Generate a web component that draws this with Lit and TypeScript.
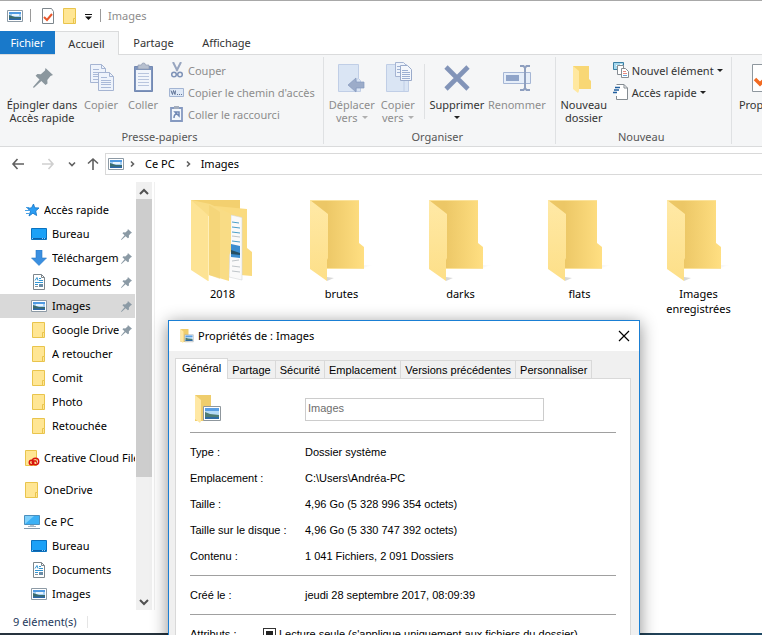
import { LitElement, html, svg, css, nothing } from "lit";
import { customElement, property, state } from "lit/decorators.js";
import { classMap } from "lit/directives/class-map.js";

const picture = (w = 16, h = 16) => html`<svg width=${w} height=${h} viewBox="0 0 16 16" aria-hidden="true">
  <path d="M.5 2.500h15v11H.5z" fill="#fff" stroke="#8d9aa5" />
  <path d="M2 4h12v8H2z" fill="#a5cff5" />
  <path d="M2 4h12v2H2z" fill="#4f9ae2" />
  <path d="M5 6h7v2H5z" fill="#e8f4fd" />
  <path d="M2 7l3 1 3 1h6v3H2z" fill="#3c6c6c" />
  <path d="M2 10.500h12V12H2z" fill="#2a66a8" />
</svg>`;

const folder = html`<svg width="16" height="16" viewBox="0 0 16 16" aria-hidden="true">
  <path d="M1.500.5h12v10l-1 5h-11z" fill="#ffe694" stroke="#e9c44c" />
  <path d="M11.500 15.500v-5h2v5z" fill="#ffe694" stroke="#e9c44c" />
</svg>`;

const desktop = html`<svg width="16" height="16" viewBox="0 0 16 16" aria-hidden="true">
  <path d="M.5 2.500h15v11H.5z" fill="#1ba1f7" stroke="#0a72bf" />
  <path d="M1 12h14v1H1z" fill="#0a5fa8" />
  <path d="M1 12.500h1M11 12.500h1M13 12.500h1" stroke="#8fd0ff" />
</svg>`;

const download = html`<svg width="16" height="16" viewBox="0 0 16 16" aria-hidden="true">
  <path d="M5 0h6v8h4.500L8 15.500.5 8H5z" fill="#3a8fe0" stroke="#2a78c8" stroke-width=".6" />
</svg>`;

const documentIcon = html`<svg width="16" height="16" viewBox="0 0 16 16" aria-hidden="true">
  <path d="M2.500.5h8l3 3v12h-11z" fill="#fff" stroke="#7d868c" />
  <path d="M10.500.5v3h3" fill="none" stroke="#7d868c" />
  <path d="M4 6.500l2-3 1 3M8 4.500h2M8 6.500h4M4 8.500h8M4 10.500h3" fill="none" stroke="#3295d2" />
  <path d="M8 10h4v3H8z" fill="#6a8ca6" />
  <path d="M4 12.500h3" stroke="#8a9298" />
</svg>`;

const star = html`<svg width="16" height="16" viewBox="0 0 16 16" aria-hidden="true">
  <path d="M9.500 2l1.200 3.800 4.300.2-3.300 2.900.9 4.600-3.700-2.300L5 14l1.500-4.800L3.500 6.300l4-.4z" fill="#2a9df4" stroke="#1878c8" stroke-width=".9" />
  <path d="M2 5.500h3M1 8.500h4M2 11.500h3" stroke="#4aa3e8" />
</svg>`;

const cloud = html`<svg width="16" height="16" viewBox="0 0 16 16" aria-hidden="true">
  <path d="M1.500.5h11v15h-11z" fill="#ffe694" stroke="#e9c44c" />
  <circle cx="7.500" cy="12.500" r="2.200" fill="none" stroke="#d7140f" stroke-width="1.500" />
  <circle cx="11.500" cy="11.500" r="3.200" fill="none" stroke="#d7140f" stroke-width="1.500" />
  <path d="M8 13l3-2.500 2 2" fill="none" stroke="#d7140f" stroke-width="1.200" />
</svg>`;

const computer = html`<svg width="16" height="16" viewBox="0 0 16 16" aria-hidden="true">
  <path d="M.5 1.500h15v9H.5z" fill="#3bb0f5" stroke="#4b8fbd" />
  <path d="M1 10V2h9z" fill="#7fd0fb" />
  <path d="M6 11h4v2H6z" fill="#b9c4cc" />
  <path d="M0 14.500h16" stroke="#8399ad" />
  <path d="M4 12.500h8" stroke="#a9b7c2" />
</svg>`;

const pinShape = svg`<path d="M12.500 0l7.500 7-2.500 1-3.200 4 .2 3.400-2 1.600-4.200-4L.8 20 0 19l6.500-7.600L2.600 7.800 4.400 6l3.400.2 4.200-3.600z" />`;
const pin = (size: number, color: string) => html`<svg width=${size} height=${size} viewBox="0 0 20 20" fill=${color} aria-hidden="true">${pinShape}</svg>`;

const sheet = (x: number, y: number) => svg`
  <path d="M${x + 0.5} ${y + 0.5}h11l4 4v14h-15z" fill="#eef3fb" stroke="#a5b4d2" />
  <path d="M${x + 11.5} ${y + 0.5}v4h4" fill="none" stroke="#a5b4d2" />
  <path d="M${x + 3} ${y + 5.5}h6M${x + 3} ${y + 8.5}h10M${x + 3} ${y + 10.5}h10M${x + 3} ${y + 12.5}h10M${x + 3} ${y + 15.5}h10" stroke="#a9b9d8" />`;

const big = (content: unknown) => html`<svg class="big-icon" width="32" height="32" viewBox="0 0 32 32" aria-hidden="true">${content}</svg>`;

const bigIcons: Record<string, unknown> = {
  pin: big(svg`<g transform="translate(7 6)" fill="#8b979e">${pinShape}</g>`),
  copy: big(svg`${sheet(5, 2)}<g transform="translate(0 -1)">${sheet(13, 11)}</g>`),
  paste: big(svg`
    <path d="M7.500 4.500h18v25h-18z" fill="#7f95bd" stroke="#7389b3" />
    <path d="M9 8h15v20H9z" fill="#f1f5fb" />
    <path d="M11 3h3.500a2 2 0 0 1 4 0H22v4H11z" fill="#b7c0cf" stroke="#8f9bb2" stroke-width=".7" />
    <path d="M11 11.500h11M11 14.500h11M11 17.500h11M11 20.500h11M11 23.500h11" stroke="#b8c5de" />`),
  move: big(svg`
    <path d="M2.500 2.500h20v14l2 2v11h-22z" fill="#dae5f4" stroke="#c0cee6" />
    <path d="M20.500 29v-11l2-2" fill="none" stroke="#c0cee6" />
    <path d="M12 23l8-7v4h8v6h-8v4z" fill="#9cacc9" stroke="#8599bd" stroke-width=".7" />`),
  copyTo: big(svg`
    <path d="M4.500 2.500h20v14l2 2v11h-22z" fill="#dae5f4" stroke="#c0cee6" />
    <path d="M22 29V19l2-2" fill="none" stroke="#c0cee6" />
    <path d="M13.500.5h8l3 3v11h-11z" fill="#eef3fb" stroke="#a5b4d2" />
    <path d="M18.500 3.500h7l4 4v11h-11z" fill="#f4f7fc" stroke="#9aabcb" />
    <path d="M20 8.500h6M20 10.500h8M20 12.500h8M20 14.500h8M20 16.500h8M15 4.500h3M15 7.500h3M15 10.500h3" stroke="#9db0d2" />`),
  cross: big(svg`<path d="M5 5l22 22M27 5l-22 22" stroke="#8294b8" stroke-width="4.600" />`),
  rename: big(svg`
    <path d="M2.500 10.500h27v11h-27z" fill="#e6eef9" stroke="#a5b6d5" />
    <path d="M5 13h13v6H5z" fill="#8fa4c9" />
    <path d="M19 4h3.500l1.500 2 1.500-2H29M24 5v22M19 28h3.500l1.500-2 1.500 2H29" fill="none" stroke="#8e9fbf" stroke-width="2" />`),
  folder: big(svg`
    <path d="M5 4h16v13l2 2v8H5z" fill="#f8d775" />
    <path d="M5 4l6 5v20l-1 2-5-4z" fill="#ffe8a0" />`),
  properties: big(svg`
    <path d="M2.500 2.500h21l5 5v22h-26z" fill="#fff" stroke="#8e979e" />
    <path d="M5 17l5 5 13-13" fill="none" stroke="#f26a21" stroke-width="3.500" />`),
};

const small = (content: unknown) => html`<svg width="16" height="16" viewBox="0 0 16 16" aria-hidden="true">${content}</svg>`;

const smallIcons: Record<string, unknown> = {
  cut: small(svg`
    <path d="M4 0l4.500 9M12 0L7.500 9" stroke="#98a6c0" stroke-width="2" />
    <circle cx="5" cy="12.500" r="2.300" fill="none" stroke="#7f93b8" stroke-width="1.500" />
    <circle cx="11" cy="12.500" r="2.300" fill="none" stroke="#7f93b8" stroke-width="1.500" />`),
  path: small(svg`
    <path d="M.5 4.500h14v8H.5z" fill="#dfe9f7" stroke="#a3b5d3" />
    <path d="M2 6.500l1.500 4 1-4 1.500 4 .5-4M8 10.500h1M10 10.500h1M12 10.500h1" fill="none" stroke="#5f7396" />`),
  link: small(svg`
    <path d="M2 2h11v13H2z" fill="#f3f7fc" stroke="#8599c0" stroke-width="1.800" />
    <path d="M5 0h5v3H5z" fill="#a3adbd" />
    <path d="M5 12c0-3 1-4 3-4M6 6h4v4z" fill="none" stroke="#7088b4" stroke-width="1.500" />`),
  item: small(svg`
    <path d="M.5.5h10v7H.5z" fill="#a5d8ee" stroke="#3a7fa3" />
    <path d="M3 3.500h2M7 2.500h2" stroke="#fff" />
    <path d="M4.500 3.500h6v9h-6z" fill="#fff" stroke="#858c92" />
    <path d="M8.500 6.500h4l3 3v6h-7z" fill="#fff" stroke="#858c92" />
    <path d="M10 9.500h3M10 11.500h4" stroke="#e58a80" />
    <path d="M10 13.500h4" stroke="#6aa4d8" />`),
  quick: small(svg`
    <path d="M3.500 12v3.500h11V4l-3.500-3.500H3.500" fill="#fff" stroke="#858c92" />
    <path d="M11 .5V4h3.500" fill="none" stroke="#858c92" />
    <path d="M2 3.500h5M1 6h5M0 8.500h4" stroke="#205f9f" stroke-width="1.400" />`),
};

const backFolder = html`<svg width="64" height="84" viewBox="0 0 64 84" aria-hidden="true">
  <defs>
    <linearGradient id="back" x1="0" y1="0" x2="1" y2="0">
      <stop offset=".3" stop-color="#ecc766" /><stop offset="1" stop-color="#ffdf82" />
    </linearGradient>
    <linearGradient id="flap" x1="0" y1="0" x2="0" y2="1">
      <stop offset="0" stop-color="#ffe9a6" /><stop offset="1" stop-color="#fddf88" />
    </linearGradient>
    <linearGradient id="shade" x1="0" y1="0" x2="1" y2="0">
      <stop offset="0" stop-color="#000" stop-opacity=".16" /><stop offset="1" stop-color="#000" stop-opacity="0" />
    </linearGradient>
  </defs>
  <path d="M54 65v4h-4l13-4zM17 77v4l7-3z" fill="url(#shade)" />
  <path d="M0 0h49v43l5 4v22H10z" fill="url(#back)" />
  <path d="M0 .5h49M16 68.500h38" stroke="#fbe29a" />
  <path d="M0 0l18 14v44l-1 2v21L0 69z" fill="url(#flap)" />
</svg>`;

const fullFolder = html`<svg width="64" height="84" viewBox="0 0 64 84" aria-hidden="true">
  <path d="M0 0h49v60H8z" fill="#f3d06f" />
  <path d="M24 6l32 3v39l5 4v24l-23-2z" fill="#fadb80" />
  <path d="M40 15l11 2.500V80l-13-3z" fill="#fafafa" stroke="#d5d8da" stroke-width=".6" />
  <path d="M41 22l7 1M41 27l8 1M41 32l8 1M41 41l8 1" stroke="#4b9fc9" />
  <path d="M41 36l8 1M41 61l7-1M41 66l8 1M41 71l8 1" stroke="#bfc5c9" />
  <path d="M40 44l9 2v12l-9-1z" fill="#3b8dcf" />
  <path d="M40 50l9 3v2l-9-1z" fill="#244f63" />
  <path d="M0 0l19 4 19 9 2 2v36l-2 4v26L18 75z" fill="#f9dc85" />
  <path d="M18 5l11 7v67l-11-4z" fill="#f1cf70" opacity=".5" />
  <path d="M0 0l17 15 1 2v39l-1 3v22L0 70z" fill="#fde394" />
  <path d="M17.500 16v65" stroke="#ffefb9" />
</svg>`;

const propertiesIcon = (size: number) => html`<svg width=${size} height=${size} viewBox="0 0 32 32" aria-hidden="true">
  <path d="M3 2h16v26H3z" fill="#efcd6c" />
  <path d="M3 2l6 5v21l-1 2-5-4z" fill="#ffe8a4" />
  <path d="M11.500 13.500h17v14h-17z" fill="#fff" stroke="#8f979d" />
  <path d="M13 15h14v11H13z" fill="#b5daf6" />
  <path d="M13 15h14v3H13z" fill="#5a9fe4" />
  <path d="M13 19l5 2 9 1v3H13z" fill="#4f7c73" />
  <path d="M13 24h14v2H13z" fill="#2e6ba5" />
</svg>`;

const caret = html`<svg class="caret" width="6" height="3" viewBox="0 0 6 3" aria-hidden="true"><path d="M0 0h6L3 3z" fill="currentColor" /></svg>`;

const chevron = (d: string, stroke = "#606060", width = 1.6) => html`<svg width="16" height="16" viewBox="0 0 16 16" fill="none" stroke=${stroke} stroke-width=${width} aria-hidden="true"><path d=${d} /></svg>`;

@customElement("ribbon-button")
export class RibbonButton extends LitElement {
  @property() label = "";
  @property() second = "";
  @property() icon = "";
  @property({ type: Boolean }) off = false;
  @property({ type: Boolean }) menu = false;
  @property({ type: Boolean }) compact = false;

  static styles = css`
    :host { display: block; flex: none; }
    button {
      border: 0; padding: 0; background: none; color: #333; font: inherit; line-height: 13px;
      width: 100%; display: flex; flex-direction: column; align-items: center; white-space: nowrap;
    }
    button:disabled { color: #8d8d8d; }
    .big-icon { margin-bottom: 4px; }
    .second { display: flex; align-items: center; gap: 4px; min-height: 13px; }
    .compact { flex-direction: row; height: 22px; gap: 3px; }
    .caret { color: #222; flex: none; }
    button:disabled .caret { color: #b0b0b0; }
    svg { display: block; flex: none; }
  `;

  render() {
    if (this.compact) {
      return html`<button class="compact" ?disabled=${this.off}>
        ${smallIcons[this.icon]}<span>${this.label}</span>${this.menu ? caret : nothing}
      </button>`;
    }
    return html`<button ?disabled=${this.off}>
      ${bigIcons[this.icon]}<span>${this.label}</span>
      <span class="second">${this.second}${this.menu ? caret : nothing}</span>
    </button>`;
  }
}

interface Place { name: string; icon: unknown; level?: number; pinned?: boolean; }

const places: Place[][] = [
  [
    { name: "Accès rapide", icon: star },
    { name: "Bureau", icon: desktop, level: 1, pinned: true },
    { name: "Téléchargements", icon: download, level: 1, pinned: true },
    { name: "Documents", icon: documentIcon, level: 1, pinned: true },
    { name: "Images", icon: picture(), level: 1, pinned: true },
    { name: "Google Drive", icon: folder, level: 1, pinned: true },
    { name: "A retoucher", icon: folder, level: 1 },
    { name: "Comit", icon: folder, level: 1 },
    { name: "Photo", icon: folder, level: 1 },
    { name: "Retouchée", icon: folder, level: 1 },
  ],
  [{ name: "Creative Cloud Files", icon: cloud }],
  [{ name: "OneDrive", icon: folder }],
  [
    { name: "Ce PC", icon: computer },
    { name: "Bureau", icon: desktop, level: 1 },
    { name: "Documents", icon: documentIcon, level: 1 },
    { name: "Images", icon: picture(), level: 1 },
  ],
];

const files = ["2018", "brutes", "darks", "flats", "Images enregistrées"];

@customElement("explorer-sidebar")
export class ExplorerSidebar extends LitElement {
  @state() private selected = "0-4";

  static styles = css`
    :host { display: flex; flex: none; border-right: 1px solid #f0f0f0; padding-right: 2px; overflow: hidden; }
    nav { width: 136px; padding-top: 16px; display: flex; flex-direction: column; gap: 8px; overflow: hidden; }
    .row {
      display: flex; align-items: center; gap: 4px; width: 135px; height: 24px; padding: 0 0 0 24px;
      border: 0; background: none; color: #000; font: inherit; text-align: left; white-space: nowrap;
    }
    .child { padding-left: 31px; gap: 5px; }
    .selected { background: #d9d9d9; }
    .name { flex: 1; min-width: 0; overflow: hidden; }
    .pin { margin: 0 3px 0 -3px; }
    svg { display: block; flex: none; }
    .bar { width: 16px; display: flex; flex-direction: column; background: #f0f0f0; }
    .bar button { border: 0; padding: 0; height: 17px; background: none; flex: none; }
    .thumb { height: 65%; background: #cdcdcd; margin-bottom: auto; }
  `;

  render() {
    return html`
      <nav aria-label="Volet de navigation">
        ${places.map((group, g) => html`<div>${group.map((place, i) => {
          const key = `${g}-${i}`;
          return html`<button
            class=${classMap({ row: true, child: !!place.level, selected: this.selected === key })}
            @click=${() => { this.selected = key; }}>
            ${place.icon}<span class="name">${place.name}</span>
            ${place.pinned ? html`<span class="pin">${pin(11, "#8b9aa5")}</span>` : nothing}
          </button>`;
        })}</div>`)}
      </nav>
      <div class="bar">
        <button aria-label="Monter">${chevron("M4 11l4-4 4 4", "#505050", 2)}</button>
        <div class="thumb"></div>
        <button aria-label="Descendre">${chevron("M4 6l4 4 4-4", "#505050", 2)}</button>
      </div>`;
  }
}

@customElement("properties-dialog")
export class PropertiesDialog extends LitElement {
  @state() private tab = 0;

  private tabs = ["Général", "Partage", "Sécurité", "Emplacement", "Versions précédentes", "Personnaliser"];
  private facts = [
    ["Type :", "Dossier système"],
    ["Emplacement :", "C:\\Users\\Andréa-PC"],
    ["Taille :", "4,96 Go (5 328 996 354 octets)"],
    ["Taille sur le disque :", "4,96 Go (5 330 747 392 octets)"],
    ["Contenu :", "1 041 Fichiers, 2 091 Dossiers"],
  ];

  static styles = css`
    :host {
      display: block; box-sizing: border-box; border: 1px solid #1a7fd4; background: #f0f0f0; color: #000;
      box-shadow: 0 3px 16px rgba(0, 0, 0, 0.45);
      font: 11px/16px "Liberation Sans", Arial, sans-serif;
    }
    svg { display: block; }
    header { display: flex; align-items: center; height: 30px; padding: 0 7px 0 10px; background: #fff; gap: 3px; }
    h2 { flex: 1; margin: 0; font: 11px/16px "Noto Sans", "Open Sans", sans-serif; }
    .close { border: 0; padding: 0; background: none; }
    .body { padding: 7px 8px 0 6px; }
    .tabs { display: flex; align-items: flex-end; height: 20px; }
    .tab {
      border: 1px solid #d9d9d9; border-left: 0; border-bottom: 0; height: 18px; padding: 0 4px;
      background: #f0f0f0; font: inherit; white-space: nowrap; color: #000;
    }
    .active { background: #fff; height: 21px; border-left: 1px solid #d9d9d9; padding: 0 6px 2px; margin-bottom: -1px; z-index: 1; }
    .panel { background: #fff; border: 1px solid #d9d9d9; padding: 14px 14px 40px; }
    .name { display: flex; align-items: flex-start; padding-bottom: 7px; }
    .icon { width: 115px; padding-left: 2px; box-sizing: border-box; flex: none; }
    .name input {
      width: 239px; height: 23px; box-sizing: border-box; margin-top: 5px; border: 1px solid #ccc; padding: 0 2px 3px;
      font: inherit; color: #6d6d6d; background: #fff;
    }
    dl { display: grid; grid-template-columns: 115px 1fr; row-gap: 10px; margin: 0; padding: 11px 0; border-top: 1px solid #a0a0a0; }
    dd { margin: 0; }
    dt, dd, label { white-space: nowrap; }
    .attributes { grid-template-columns: 73px 1fr; }
    label { display: flex; align-items: center; gap: 3px; }
    .tick { appearance: none; margin: 0; width: 13px; height: 13px; border: 1px solid #333; background: #fff; padding: 2px; }
    .tick:indeterminate { background: #222 content-box; }
  `;

  render() {
    return html`
      <header>
        ${propertiesIcon(16)}
        <h2>Propriétés de : Images</h2>
        <button class="close" aria-label="Fermer">${chevron("M3 3l10 10M13 3L3 13", "#000", 1.2)}</button>
      </header>
      <div class="body">
        <div class="tabs" role="tablist">
          ${this.tabs.map((name, i) => html`<button role="tab" aria-selected=${this.tab === i}
            class=${classMap({ tab: true, active: this.tab === i })} @click=${() => { this.tab = i; }}>${name}</button>`)}
        </div>
        <div class="panel" role="tabpanel">
          <div class="name">
            <div class="icon">${propertiesIcon(32)}</div>
            <input type="text" aria-label="Nom" value="Images" />
          </div>
          <dl>${this.facts.map(([term, value]) => html`<dt>${term}</dt><dd>${value}</dd>`)}</dl>
          <dl><dt>Créé le :</dt><dd>jeudi 28 septembre 2017, 08:09:39</dd></dl>
          <dl class="attributes">
            <dt>Attributs :</dt>
            <dd><label><input class="tick" type="checkbox" .indeterminate=${true} />Lecture seule (s'applique uniquement aux fichiers du dossier)</label></dd>
          </dl>
        </div>
      </div>`;
  }
}

@customElement("app-root")
export class AppRoot extends LitElement {
  static styles = css`
    :host {
      display: flex; flex-direction: column; position: relative; height: 100vh; box-sizing: border-box; overflow: hidden;
      border-top: 1px solid #a8a8a8; background: #fff; color: #000;
      font: 11px/16px "Noto Sans", "Open Sans", sans-serif;
    }
    svg { display: block; flex: none; }
    button { border: 0; padding: 0; background: none; font: inherit; }
    .title { display: flex; align-items: center; height: 30px; box-sizing: border-box; padding: 0 0 1px 7px; color: #8c8c8c; flex: none; }
    .bar { width: 1px; height: 13px; background: #9a9a9a; margin: 0 7px; }
    .quick { display: flex; gap: 6px; padding-left: 2px; }
    .quick + .bar { margin-left: 0; }
    .tabs { display: flex; height: 23px; flex: none; }
    .tab { color: #333; text-align: center; }
    .file { width: 55px; background: #1979ca; color: #fff; }
    .home { width: 64px; background: #f5f6f7; border: 1px solid #dadbdc; border-width: 1px 1px 0 0; margin-bottom: -1px; z-index: 1; height: 24px; }
    .share { width: 69px; }
    .view { width: 77px; }
    .ribbon { display: flex; flex: none; height: 93px; box-sizing: border-box; background: #f5f6f7; border: 1px solid #dadbdc; border-width: 1px 0; overflow: hidden; padding: 2px 0; }
    .group { display: flex; flex-direction: column; justify-content: space-between; flex: none; border-right: 1px solid #dfe1e3; padding: 0 8px 0 4px; }
    .commands { display: flex; padding-top: 5px; }
    .group-name { text-align: center; color: #555; line-height: 14px; }
    .list { margin-top: -3px; padding-left: 5px; display: flex; flex-direction: column; align-items: flex-start; }
    .divider { width: 1px; height: 55px; background: #dfe1e3; margin: 2px 2px 0 4px; }
    .w42 { width: 42px; }
    .w44 { width: 44px; }
    .w48 { width: 48px; }
    .w60 { width: 60px; }
    .w76 { width: 76px; }
    .address { display: flex; align-items: center; height: 35px; box-sizing: border-box; padding: 0 0 1px 10px; flex: none; }
    .arrows { display: flex; align-items: center; width: 95px; gap: 14px; flex: none; box-sizing: border-box; }
    .arrows .up { margin-left: -9px; }
    .arrows .recent { margin-left: -6px; }
    .path { display: flex; align-items: center; flex: 1; height: 20px; border: 1px solid #d9d9d9; border-right: 0; padding-left: 2px; white-space: nowrap; }
    .path button { margin: 0 5px; }
    .main { display: flex; flex: 1; min-height: 0; }
    .files { flex: 1; display: flex; align-items: flex-start; align-content: flex-start; flex-wrap: wrap; padding: 18px 0 0 8px; overflow: hidden; }
    .file-item { width: 119px; display: flex; flex-direction: column; align-items: center; line-height: 15px; gap: 2px; }
    .file-item span { max-width: 80px; text-align: center; }
    .status { display: flex; align-items: center; height: 23px; padding-left: 13px; color: #1e395b; flex: none; }
    .status span { border-right: 1px solid #e5e5e5; padding-right: 10px; line-height: 12px; }
    .taskbar { height: 2px; flex: none; background: linear-gradient(90deg, #26333d 60%, #1f4a66); }
    .dialog { position: absolute; left: 168px; top: 319px; width: 472px; z-index: 2; }
  `;

  render() {
    return html`
      <div class="title">
        ${picture()}
        <span class="bar"></span>
        <div class="quick">
          ${small(svg`<path d="M2.500.5h9l2 3v12h-11z" fill="#fff" stroke="#7d868c" /><path d="M4 9l3 3 5-6" fill="none" stroke="#e8562a" stroke-width="2" />`)}
          ${folder}
          ${small(svg`<path d="M1 6h7v1H1zM1 8.500h7L4.500 12z" fill="#111" />`)}
        </div>
        <span class="bar"></span>
        <span>Images</span>
      </div>
      <div class="tabs">
        <button class="tab file">Fichier</button>
        <button class="tab home">Accueil</button>
        <button class="tab share">Partage</button>
        <button class="tab view">Affichage</button>
      </div>
      <div class="ribbon">
        <section class="group">
          <div class="commands">
            <ribbon-button class="w76" icon="pin" label="Épingler dans" second="Accès rapide"></ribbon-button>
            <ribbon-button class="w42" icon="copy" label="Copier" off></ribbon-button>
            <ribbon-button class="w42" icon="paste" label="Coller" off></ribbon-button>
            <div class="list">
              <ribbon-button compact icon="cut" label="Couper" off></ribbon-button>
              <ribbon-button compact icon="path" label="Copier le chemin d'accès" off></ribbon-button>
              <ribbon-button compact icon="link" label="Coller le raccourci" off></ribbon-button>
            </div>
          </div>
          <div class="group-name">Presse-papiers</div>
        </section>
        <section class="group">
          <div class="commands">
            <ribbon-button class="w48" icon="move" label="Déplacer" second="vers" off menu></ribbon-button>
            <ribbon-button class="w44" icon="copyTo" label="Copier" second="vers" off menu></ribbon-button>
            <span class="divider"></span>
            <ribbon-button class="w60" icon="cross" label="Supprimer" menu></ribbon-button>
            <ribbon-button class="w60" icon="rename" label="Renommer" off></ribbon-button>
          </div>
          <div class="group-name">Organiser</div>
        </section>
        <section class="group">
          <div class="commands">
            <ribbon-button class="w48" icon="folder" label="Nouveau" second="dossier"></ribbon-button>
            <div class="list">
              <ribbon-button compact icon="item" label="Nouvel élément" menu></ribbon-button>
              <ribbon-button compact icon="quick" label="Accès rapide" menu></ribbon-button>
            </div>
          </div>
          <div class="group-name">Nouveau</div>
        </section>
        <section class="group">
          <div class="commands">
            <ribbon-button class="w60" icon="properties" label="Propriétés" menu></ribbon-button>
          </div>
        </section>
      </div>
      <div class="address">
        <div class="arrows">
          <button aria-label="Précédent">${chevron("M14 8H3M7.500 3L3 8l4.500 5")}</button>
          <button aria-label="Suivant">${chevron("M2 8h11M8.500 3L13 8l-4.500 5", "#cfcfcf")}</button>
          <button class="recent" aria-label="Emplacements récents">${chevron("M5 6.500l3 3 3-3")}</button>
          <button class="up" aria-label="Monter">${chevron("M8 14V3M3 7.500L8 3l5 4.500")}</button>
        </div>
        <div class="path">
          ${picture()}
          ${chevron("M7 5.500L9.500 8 7 10.500")}
          <button>Ce PC</button>
          ${chevron("M7 5.500L9.500 8 7 10.500")}
          <button>Images</button>
        </div>
      </div>
      <div class="main">
        <explorer-sidebar></explorer-sidebar>
        <div class="files">
          ${files.map((name, i) => html`<div class="file-item">${i === 0 ? fullFolder : backFolder}<span>${name}</span></div>`)}
        </div>
      </div>
      <div class="status"><span>9 élément(s)</span></div>
      <div class="taskbar"></div>
      <properties-dialog class="dialog" role="dialog" aria-label="Propriétés de : Images"></properties-dialog>
    `;
  }
}
